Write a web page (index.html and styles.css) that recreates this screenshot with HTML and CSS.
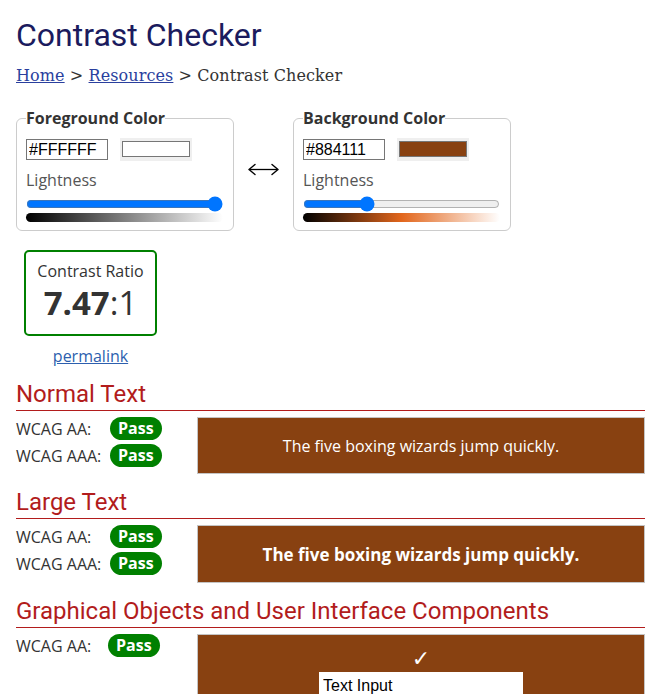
FILE: index.html
```html
<!DOCTYPE html>
<html lang="en">
<head>
<meta charset="utf-8">
<title>Contrast Checker</title>
<link rel="stylesheet" href="styles.css">
</head>
<body>
<h1 class="title">Contrast Checker</h1>
<nav class="crumbs"><a href="#">Home</a> &gt; <a href="#">Resources</a> &gt; Contrast Checker</nav>

<div class="pickers">
  <fieldset class="picker">
    <legend>Foreground Color</legend>
    <div class="inputs">
      <input class="hex" type="text" value="#FFFFFF">
      <span class="swatch"><span class="swatch-in swatch-fg"></span></span>
    </div>
    <label class="light">Lightness</label>
    <input class="range" type="range" min="0" max="100" value="100">
    <div class="grad grad-fg"></div>
  </fieldset>
  <div class="swap" aria-label="swap colors">
    <svg width="31" height="13" viewBox="0 0 31 13" aria-hidden="true">
      <path d="M2 6.5H29" stroke="#000" stroke-width="1.3" fill="none"/>
      <path d="M1 6.5L7 1.5M1 6.5L7 11.5M30 6.5L24 1.5M30 6.5L24 11.5" stroke="#000" stroke-width="1.4" stroke-linecap="round" fill="none"/>
    </svg>
  </div>
  <fieldset class="picker">
    <legend>Background Color</legend>
    <div class="inputs">
      <input class="hex" type="text" value="#884111">
      <span class="swatch"><span class="swatch-in swatch-bg"></span></span>
    </div>
    <label class="light">Lightness</label>
    <input class="range" type="range" min="0" max="100" value="31">
    <div class="grad grad-bg"></div>
  </fieldset>
</div>

<div class="ratio-wrap">
  <div class="ratio">
    <div class="ratio-label">Contrast Ratio</div>
    <div class="ratio-value"><b>7.47</b>:1</div>
  </div>
  <a class="permalink" href="#">permalink</a>
</div>

<section class="sec">
  <h2 class="sec-title">Normal Text</h2>
  <div class="result">
    <div class="checks">
      <div class="check"><span class="lvl">WCAG AA:</span><span class="pass">Pass</span></div>
      <div class="check"><span class="lvl">WCAG AAA:</span><span class="pass">Pass</span></div>
    </div>
    <div class="preview preview-normal">The five boxing wizards jump quickly.</div>
  </div>
</section>

<section class="sec">
  <h2 class="sec-title">Large Text</h2>
  <div class="result">
    <div class="checks">
      <div class="check"><span class="lvl">WCAG AA:</span><span class="pass">Pass</span></div>
      <div class="check"><span class="lvl">WCAG AAA:</span><span class="pass">Pass</span></div>
    </div>
    <div class="preview preview-large">The five boxing wizards jump quickly.</div>
  </div>
</section>

<section class="sec">
  <h2 class="sec-title">Graphical Objects and User Interface Components</h2>
  <div class="result">
    <div class="checks">
      <div class="check"><span class="lvl lvl-ui">WCAG AA:</span><span class="pass">Pass</span></div>
    </div>
    <div class="preview preview-ui">
      <div class="tick">&#10003;</div>
      <input class="ui-input" type="text" value="Text Input">
    </div>
  </div>
</section>
</body>
</html>
```

FILE: styles.css
```css
html, body {
  margin: 0;
  background: #fff;
}
body {
  padding: 0 11px 0 16px;
  font-family: "Open Sans", "Liberation Sans", sans-serif;
  color: #333;
  overflow: hidden;
}
.title {
  margin: 16px 0 0;
  font-family: Roboto, "Liberation Sans", sans-serif;
  font-weight: 400;
  font-size: 32px;
  line-height: 38px;
  color: #1b1b5e;
}
.crumbs {
  margin-top: 12px;
  font-family: "DejaVu Serif", "Liberation Serif", serif;
  font-size: 16px;
  letter-spacing: 0.1px;
  color: #333;
}
.crumbs a {
  color: #2a3f9e;
}
.pickers {
  display: flex;
  align-items: center;
  margin-top: 22px;
}
.picker {
  margin: 0;
  width: 218px;
  box-sizing: border-box;
  padding: 0 9px 8px;
  border: 1px solid #ccc;
  border-radius: 6px;
}
.picker legend {
  padding: 0;
  font-weight: 700;
  font-size: 16px;
  color: #333;
}
.inputs {
  display: flex;
  align-items: center;
  gap: 12px;
  margin-top: 9px;
}
.hex {
  box-sizing: border-box;
  width: 82px;
  height: 21px;
  margin: 0;
  padding: 0 2px;
  border: 1px solid #767676;
  font-family: "Liberation Sans", Arial, sans-serif;
  font-size: 16px;
  color: #000;
}
.swatch {
  display: block;
  padding: 3px 2px 4px;
  background: #efefef;
}
.swatch-in {
  display: block;
  width: 66px;
  height: 14px;
  border: 1px solid #767676;
}
.swatch-fg { background: #ffffff; }
.swatch-bg { background: #884111; }
.light {
  display: block;
  margin-top: 8px;
  font-size: 16px;
  line-height: 22px;
  color: #555;
}
.range {
  display: block;
  width: 197px;
  margin: 5px 0 0;
}
.grad {
  height: 9px;
  width: 197px;
  margin-top: 1px;
  border-radius: 5px;
}
.grad-fg { background: linear-gradient(to right, #000, #fff); }
.grad-bg { background: linear-gradient(to right, #000, #e2661c, #fff); }
.swap {
  width: 59px;
  display: flex;
  justify-content: center;
  align-items: center;
}
.swap svg {
  display: block;
}
.ratio-wrap {
  display: inline-flex;
  flex-direction: column;
  align-items: center;
  margin: 19px 0 0 8px;
}
.ratio {
  box-sizing: border-box;
  width: 133px;
  height: 86px;
  border: 2px solid #008000;
  border-radius: 5px;
  text-align: center;
  padding-top: 8px;
}
.ratio-label {
  font-size: 16px;
  line-height: 22px;
  color: #333;
}
.ratio-value {
  font-size: 33px;
  line-height: 41px;
  color: #333;
}
.ratio-value b {
  font-weight: 700;
}
.permalink {
  margin-top: 9px;
  font-size: 16px;
  line-height: 22px;
  color: #2d5fae;
}
.sec {
  margin-top: 14px;
}
.sec:first-of-type {
  margin-top: 13px;
}
.sec-title {
  margin: 0;
  padding-bottom: 1px;
  font-family: Roboto, "Liberation Sans", sans-serif;
  font-weight: 400;
  font-size: 24px;
  line-height: 29px;
  color: #b21c1c;
  border-bottom: 1px solid #b21c1c;
}
.result {
  display: flex;
  margin-top: 6px;
}
.checks {
  width: 181px;
  flex: none;
  margin-top: -2px;
}
.check {
  display: flex;
  align-items: center;
  height: 27px;
}
.lvl {
  width: 94px;
  font-size: 16px;
  color: #333;
}
.lvl-ui {
  width: 92px;
}
.pass {
  display: inline-block;
  height: 23px;
  line-height: 23px;
  padding: 0 8px;
  border-radius: 12px;
  background: #008000;
  color: #fff;
  font-weight: 700;
  font-size: 16px;
}
.preview {
  flex: 1;
  box-sizing: border-box;
  border: 1px solid #c4c4c4;
  background: #884111;
  color: #fff;
  display: flex;
  align-items: center;
  justify-content: center;
}
.preview-normal {
  height: 57px;
  font-size: 16px;
}
.preview-large {
  height: 58px;
  font-size: 17px;
  font-weight: 700;
}
.preview-ui {
  height: 80px;
  flex-direction: column;
  justify-content: flex-start;
  padding-top: 10px;
}
.tick {
  font-family: "DejaVu Sans", sans-serif;
  font-size: 22px;
  line-height: 27px;
  color: #fff;
}
.ui-input {
  box-sizing: border-box;
  width: 204px;
  height: 26px;
  margin: 0;
  padding: 2px 4px 0;
  border: 0;
  background: #fff;
  font-family: "Liberation Sans", Arial, sans-serif;
  font-size: 16px;
  color: #000;
}
```
